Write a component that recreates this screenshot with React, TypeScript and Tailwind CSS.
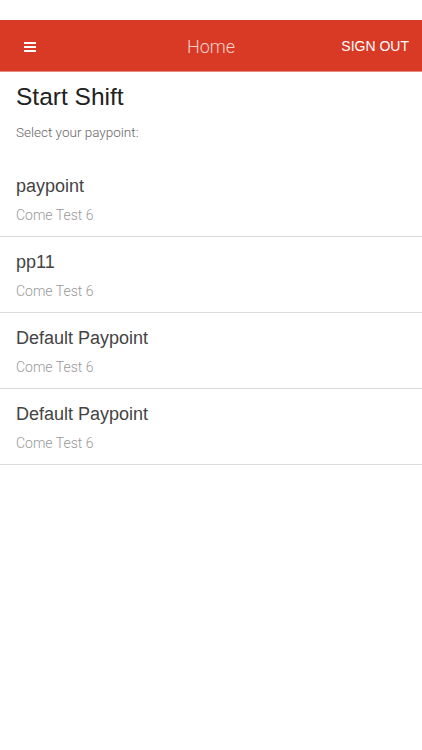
const paypoints = [
  { name: "paypoint", site: "Come Test 6" },
  { name: "pp11", site: "Come Test 6" },
  { name: "Default Paypoint", site: "Come Test 6" },
  { name: "Default Paypoint", site: "Come Test 6" },
];

export default function App() {
  return (
    <div className="min-h-[750px] bg-white font-['Liberation_Sans',Arial,sans-serif]">
      <div className="h-5" />
      <header className="grid h-[52px] grid-cols-[1fr_auto_1fr] items-center border-b border-[#e98b7c] bg-[#d83a25] px-[13px] pt-[2px] text-white">
        <button className="flex items-center pl-[11px]" aria-label="Menu">
          <svg width="12" height="10" viewBox="0 0 12 10" aria-hidden>
            <rect x="0" y="0" width="12" height="2" fill="#fff" />
            <rect x="0" y="4" width="12" height="2" fill="#fff" />
            <rect x="0" y="8" width="12" height="2" fill="#fff" />
          </svg>
        </button>
        <h1 className="font-['Roboto',sans-serif] text-[18px] font-light text-[#f7d3cc]">Home</h1>
        <button className="justify-self-end text-[14px] font-medium">SIGN OUT</button>
      </header>

      <div className="px-4 pt-[10px]">
        <h2 className="text-[24.5px] leading-[30px] text-[#222]">Start Shift</h2>
        <p className="mt-[10px] font-['Roboto',sans-serif] text-[13.5px] font-light text-[#666]">
          Select your paypoint:
        </p>
      </div>

      <ul className="mt-[19px]">
        {paypoints.map((p, i) => (
          <li key={i} className="border-b border-[#dcdcdc] px-4 pt-[13px] pb-[11px]">
            <div className="text-[18px] leading-[24px] text-[#444]">{p.name}</div>
            <div className="mt-[7px] font-['Roboto',sans-serif] text-[14px] leading-[20px] font-light text-[#999]">
              {p.site}
            </div>
          </li>
        ))}
      </ul>
    </div>
  );
}
